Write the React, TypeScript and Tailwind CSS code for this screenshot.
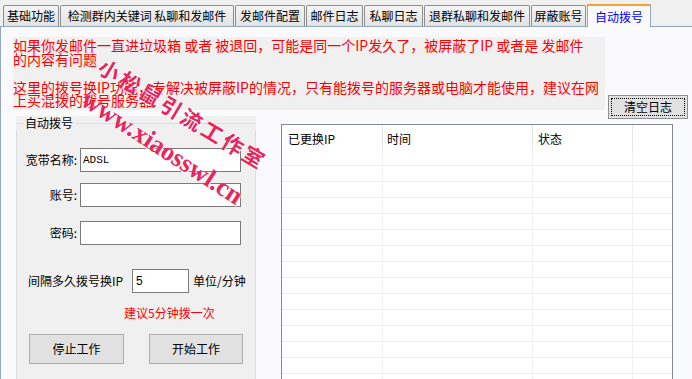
import React from 'react';

const tabs = [
  { label: '基础功能', w: 'w-[56px]' },
  { label: '检测群内关键词 私聊和发邮件', w: 'w-[174px]' },
  { label: '发邮件配置', w: 'w-[70px]' },
  { label: '邮件日志', w: 'w-[57px]' },
  { label: '私聊日志', w: 'w-[59px]' },
  { label: '退群私聊和发邮件', w: 'w-[106px]' },
  { label: '屏蔽账号', w: 'w-[55px]' },
];

const bodyRows = Array.from({ length: 15 }, (_, i) => i);

function Field({ label, value }: { label: string; value?: string }) {
  return (
    <div className="flex items-center h-[24px]">
      <span className="w-[62px] shrink-0 text-right pr-[2px]">{label}</span>
      <div className="ml-[1px] w-[161px] h-[24px] border border-[#7a7a7a] bg-white flex items-center pl-[2px] font-['Liberation_Mono',monospace] text-[11px]">
        {value}
      </div>
    </div>
  );
}

export default function App() {
  return (
    <div className="relative w-[692px] h-[379px] overflow-hidden bg-[#f0f0f0] flex flex-col text-[12px] text-black font-['Noto_Sans_CJK_SC',sans-serif]">
      {/* Tab strip */}
      <div className="h-[26px] shrink-0 flex items-end gap-[1px] pl-[3px]">
        {tabs.map((t) => (
          <div
            key={t.label}
            className={`${t.w} h-[21px] flex items-center justify-center leading-none whitespace-nowrap border border-b-0 border-[#8e8e8e] rounded-t-[2px] bg-linear-to-b from-[#f5f5f5] to-[#e3e3e3]`}
          >
            {t.label}
          </div>
        ))}
        <div className="relative z-10 w-[64px] h-[23px] -mb-px flex items-center justify-center leading-none text-[#0000ff] bg-[#fafafc] border-t-2 border-t-[#f2a23a] border-x border-x-[#93a7ba]">
          自动拨号
        </div>
      </div>

      {/* Panel */}
      <div className="flex-1 min-h-0 flex flex-col bg-[#fafafc] border-t border-l border-[#93a7ba]">
        <div className="flex items-start pt-[10px] shrink-0">
          <div className="ml-[12px] w-[592px] h-[73px] pt-px bg-[#f0f0f0] text-[#ff0000] text-[14px] whitespace-nowrap">
            <p className="leading-[14px]">
              如果你发邮件一直进垃圾箱 或者 被退回，可能是同一个IP发久了，被屏蔽了IP 或者是 发邮件
              <br />
              的内容有问题
            </p>
            <p className="mt-[15px] leading-[13px]">
              这里的拨号换IP功能，专解决被屏蔽IP的情况，只有能拨号的服务器或电脑才能使用，建议在网
              <br />
              上买混拨的拨号服务器
            </p>
          </div>
          <button className="ml-[3px] mt-[58px] w-[80px] h-[24px] p-[2px] border border-[#8f8f8f] bg-[#e1e1e1]">
            <div className="h-full border border-dotted border-black flex items-center justify-center leading-none">
              清空日志
            </div>
          </button>
        </div>

        <div className="flex flex-1 min-h-0 -mt-[3px]">
          {/* Left group */}
          <div className="ml-[15px] w-[240px] flex flex-col bg-[#f0f0f0]">
            <div className="h-[14px] flex items-center shrink-0">
              <span className="w-[8px] h-px bg-[#dcdcdc]" />
              <span className="ml-[1px] leading-none">自动拨号</span>
              <span className="ml-[2px] flex-1 h-px bg-[#dcdcdc]" />
            </div>
            <div className="flex-1 border-x border-[#dcdcdc] flex flex-col">
              <div className="mt-[18px]">
                <Field label="宽带名称:" value="ADSL" />
              </div>
              <div className="mt-[11px]">
                <Field label="账号:" />
              </div>
              <div className="mt-[14px]">
                <Field label="密码:" />
              </div>
              <div className="mt-[24px] flex items-center h-[24px] pl-[11px]">
                <span className="w-[96px] shrink-0 whitespace-nowrap">间隔多久拨号换IP</span>
                <div className="ml-[8px] w-[57px] h-[24px] border border-[#7a7a7a] bg-white flex items-center pl-[3px] font-['Liberation_Sans',sans-serif]">
                  5
                </div>
                <span className="ml-[4px] whitespace-nowrap">单位/分钟</span>
              </div>
              <div className="mt-[13px] pl-[107px] leading-[14px] text-[#ff0000]">建议5分钟拨一次</div>
              <div className="mt-[14px] flex pl-[12px]">
                <button className="w-[95px] h-[30px] bg-[#e1e1e1] border border-[#adadad]">停止工作</button>
                <button className="ml-[25px] w-[94px] h-[30px] bg-[#e1e1e1] border border-[#adadad]">开始工作</button>
              </div>
            </div>
          </div>

          {/* Log table */}
          <div className="ml-[25px] mt-[8px] w-[392px] bg-white border-x border-t border-[#828790] overflow-hidden">
            <div className="h-[25px] flex">
              <div className="w-[101px] border-r border-[#e5e5e5] pl-[6px] pt-[3px] flex items-center">已更换IP</div>
              <div className="w-[150px] border-r border-[#e5e5e5] pl-[4px] pt-[3px] flex items-center">时间</div>
              <div className="w-[100px] border-r border-[#e5e5e5] pl-[5px] pt-[3px] flex items-center">状态</div>
              <div className="flex-1" />
            </div>
            {bodyRows.map((r) => (
              <div key={r} className="h-[16px] flex mr-px border-b border-[#ececec]">
                <div className="w-[101px] border-r border-[#f0f0f0]" />
                <div className="w-[150px] border-r border-[#f0f0f0]" />
                <div className="w-[100px] border-r border-[#f0f0f0]" />
                <div className="flex-1" />
              </div>
            ))}
          </div>
        </div>
      </div>

      {/* Watermark */}
      <span className="absolute left-[183px] top-[114px] -translate-x-1/2 -translate-y-1/2 rotate-[31deg] whitespace-nowrap text-[21px] font-bold tracking-[3px] leading-none text-[#e6265c] [text-shadow:1px_1px_0_#ffffff]">
        小松鼠引流工作室
      </span>
      <span className="absolute left-[162px] top-[148px] -translate-x-1/2 -translate-y-1/2 rotate-[33deg] whitespace-nowrap text-[26px] font-bold leading-none text-[#e6265c] font-['Liberation_Serif',serif] [text-shadow:1px_1px_0_#ffffff]">
        www.xiaosswl.cn
      </span>
    </div>
  );
}
